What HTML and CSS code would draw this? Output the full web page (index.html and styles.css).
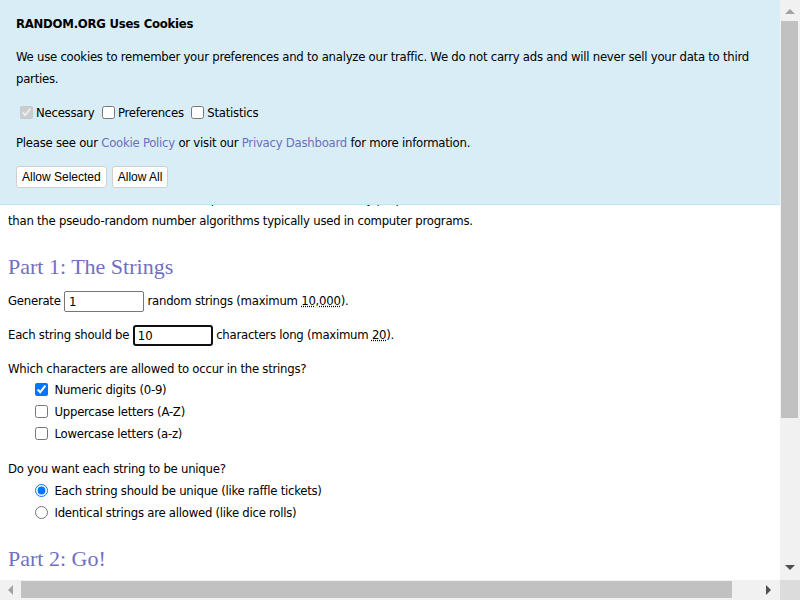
FILE: index.html
```html
<!DOCTYPE html>
<html lang="en">
<head>
<meta charset="utf-8">
<title>RANDOM.ORG - String Generator</title>
<link rel="stylesheet" href="styles.css">
</head>
<body>
<div class="page">
  <header class="site-head"></header>
  <p class="intro">The randomness comes from atmospheric noise, which for many purposes is better<br>than the pseudo-random number algorithms typically used in computer programs.</p>

  <h2 class="part">Part 1: The Strings</h2>
  <p class="row">Generate <input class="field" type="text" value="1"> random strings (maximum <abbr class="max" title="10,000">10,000</abbr>).</p>
  <p class="row">Each string should be <input class="field focused" type="text" value="10"> characters long (maximum <abbr class="max" title="20">20</abbr>).</p>
  <p class="row tight">Which characters are allowed to occur in the strings?</p>
  <div class="options first">
    <label class="opt"><input class="box" type="checkbox" checked> Numeric digits (0-9)</label>
    <label class="opt"><input class="box" type="checkbox"> Uppercase letters (A-Z)</label>
    <label class="opt"><input class="box" type="checkbox"> Lowercase letters (a-z)</label>
  </div>
  <p class="row tight">Do you want each string to be unique?</p>
  <div class="options">
    <label class="opt"><input class="box" type="radio" name="u" checked> Each string should be unique (like raffle tickets)</label>
    <label class="opt"><input class="box" type="radio" name="u"> Identical strings are allowed (like dice rolls)</label>
  </div>
  <h2 class="part">Part 2: Go!</h2>
</div>

<div class="cookie">
  <div class="cookie-title">RANDOM.ORG Uses Cookies</div>
  <p class="cookie-text">We use cookies to remember your preferences and to analyze our traffic. We do not carry ads and will never sell your data to third parties.</p>
  <div class="cookie-choices">
    <label><input type="checkbox" checked disabled>Necessary</label>
    <label><input type="checkbox">Preferences</label>
    <label><input type="checkbox">Statistics</label>
  </div>
  <p class="cookie-more">Please see our <a href="#" class="link">Cookie Policy</a> or visit our <a href="#" class="link">Privacy Dashboard</a> for more information.</p>
  <div class="cookie-buttons">
    <button class="btn">Allow Selected</button>
    <button class="btn">Allow All</button>
  </div>
</div>

<div class="vscroll">
  <span class="arrow up"></span>
  <span class="vthumb"></span>
  <span class="arrow down"></span>
</div>
<div class="hscroll">
  <span class="arrow left"></span>
  <span class="hthumb"></span>
  <span class="arrow right"></span>
</div>
<div class="corner"></div>
</body>
</html>
```
FILE: styles.css
```css
html { overflow: hidden; }
body {
  margin: 8px;
  font-family: "DejaVu Sans Condensed", "DejaVu Sans", sans-serif;
  font-stretch: condensed;
  font-size: 13px;
  letter-spacing: -0.25px;
  line-height: 22px;
  color: #000;
  background: #fff;
}
.site-head { height: 168px; }
.intro { margin: 12px 0 0; white-space: nowrap; }
.part {
  font-family: "Liberation Serif", serif;
  font-weight: normal;
  font-size: 22px;
  letter-spacing: 0;
  line-height: 23px;
  color: #7070c2;
  margin: 23px 0 11px;
}
.row { margin: 12px 0; }
.row.tight { margin-bottom: 0; }
.field {
  width: 80px;
  height: 21px;
  box-sizing: border-box;
  border: 1px solid #767676;
  border-radius: 2px;
  padding: 1px 4px;
  font: inherit;
  font-size: 13px;
  line-height: 17px;
  vertical-align: middle;
  margin: 0;
}
.field.focused {
  border: 2px solid #101010;
  border-radius: 3px;
  padding: 0 3px;
}
.max { text-decoration: underline dotted; }
.options { padding-left: 23px; margin-bottom: 12px; }
.options.first { margin-top: -1px; margin-bottom: 13px; }
.opt { display: block; }
.box { margin: 3px 3px 3px 4px; vertical-align: -2px; }

.cookie {
  position: fixed;
  top: 0;
  left: 0;
  right: 20px;
  background: #d9edf7;
  border-bottom: 1px solid #bce8f1;
  padding: 13px 16px 16px;
}
.cookie-title { font-weight: bold; }
.cookie-text { margin: 11px 0 0; }
.cookie-choices { margin-top: 12px; }
.cookie-choices input { margin: 3px 3px 3px 4px; vertical-align: -2px; }
.cookie-more { margin: 8px 0 0; }
.link { color: #6e6ec0; text-decoration: none; }
.cookie-buttons { display: flex; gap: 5px; margin-top: 12px; }
.btn {
  font-family: "Liberation Sans", Arial, sans-serif;
  font-size: 12px;
  letter-spacing: 0;
  height: 22px;
  line-height: 18px;
  padding: 0 5px;
  background: #fff;
  color: #000;
  border: 1px solid #cfcfcf;
  border-radius: 3px;
}

.vscroll {
  position: fixed;
  top: 0;
  right: 0;
  width: 20px;
  height: 580px;
  background: #f1f1f1;
}
.vthumb {
  position: absolute;
  left: 1px;
  top: 21px;
  width: 17px;
  height: 397px;
  background: #c1c1c1;
}
.hscroll {
  position: fixed;
  left: 0;
  bottom: 0;
  width: 780px;
  height: 20px;
  background: #f1f1f1;
}
.hthumb {
  position: absolute;
  left: 21px;
  top: 1px;
  width: 711px;
  height: 17px;
  background: #c1c1c1;
}
.corner {
  position: fixed;
  right: 0;
  bottom: 0;
  width: 20px;
  height: 20px;
  background: #dcdcdc;
}
.arrow { position: absolute; width: 0; height: 0; }
.arrow.up { left: 5px; top: 9px; border-left: 5px solid transparent; border-right: 5px solid transparent; border-bottom: 5px solid #a3a3a3; }
.arrow.down { left: 5px; top: 565px; border-left: 5px solid transparent; border-right: 5px solid transparent; border-top: 5px solid #505050; }
.arrow.left { left: 8px; top: 5px; border-top: 5px solid transparent; border-bottom: 5px solid transparent; border-right: 5px solid #a3a3a3; }
.arrow.right { left: 766px; top: 5px; border-top: 5px solid transparent; border-bottom: 5px solid transparent; border-left: 5px solid #505050; }
```
